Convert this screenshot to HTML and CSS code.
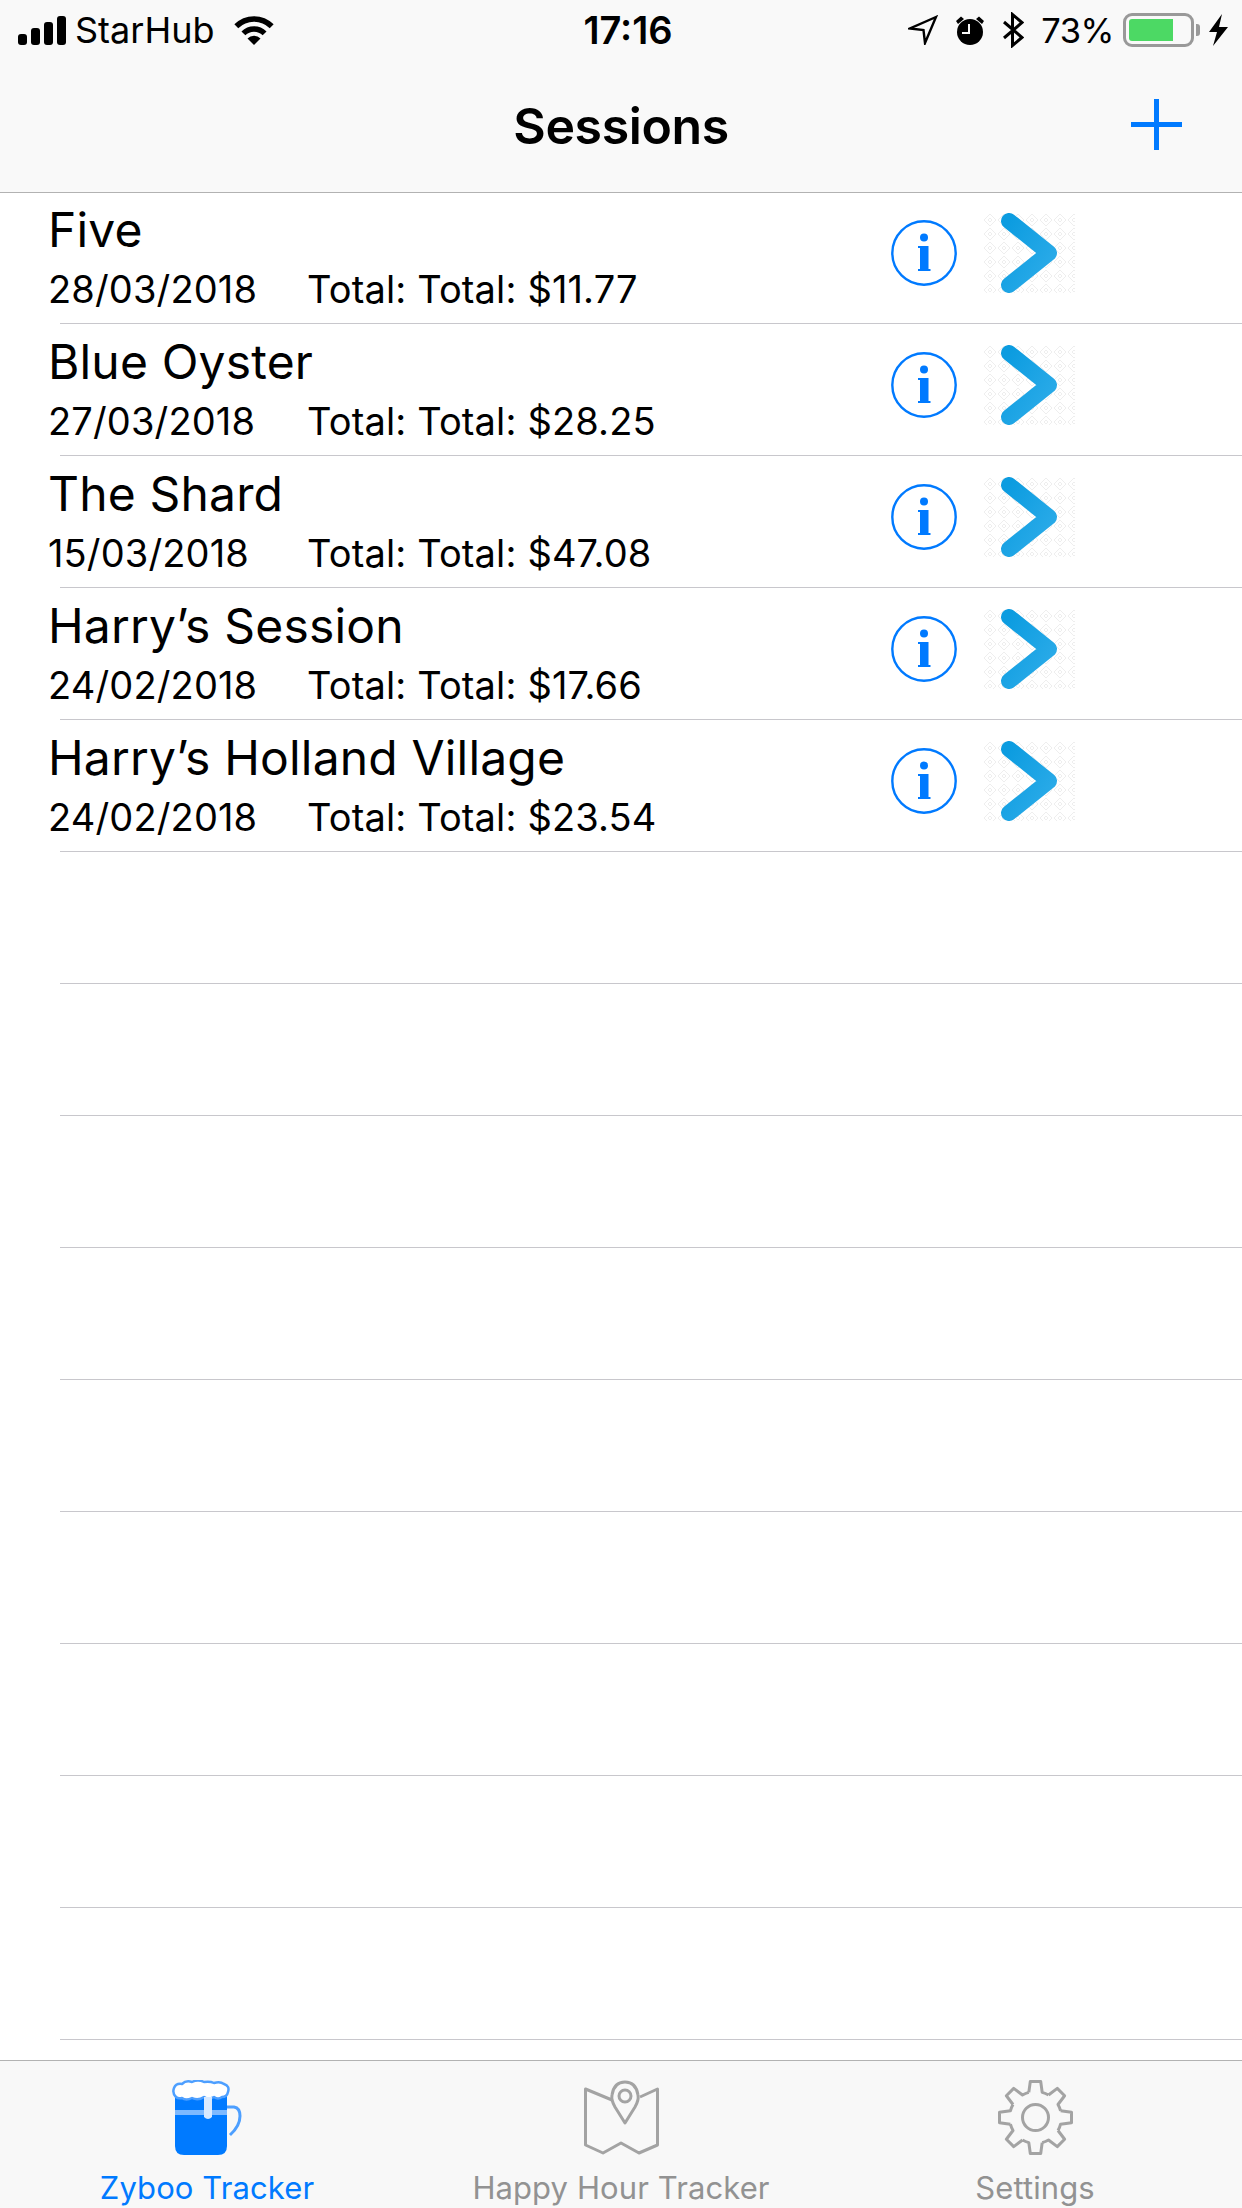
FILE: index.html
```html
<!DOCTYPE html>
<html lang="en">
<head>
  <meta charset="UTF-8" />
  <meta name="viewport" content="width=device-width, initial-scale=1" />
  <title>Sessions</title>
  <link rel="stylesheet" href="styles.css">
</head>
<body>
  <div class="page">
    <svg class="defs" width="0" height="0">
      <defs>
        <pattern id="tilePattern" width="14" height="14" patternUnits="userSpaceOnUse">
          <path d="M7 1 L13 7 L7 13 L1 7 Z M7 5 L9 7 L7 9 L5 7 Z" fill="none" stroke="#eeeeee" stroke-width="1" />
        </pattern>
        <linearGradient id="chevronFill" x1="0" y1="0" x2="1" y2="1">
          <stop offset="0" stop-color="#0c9ce0" />
          <stop offset="1" stop-color="#2dace9" />
        </linearGradient>
        <symbol id="infoIcon" viewBox="0 0 66 66">
          <circle cx="33" cy="33" r="31.700" fill="none" stroke="#007aff" stroke-width="2.400" />
          <circle cx="33" cy="17.500" r="4" fill="#007aff" />
          <path d="M27 26 H37.500 V49 H39.500 V51 H27 V49 H29 V28 H27 Z" fill="#007aff" />
        </symbol>
        <symbol id="nextIcon" viewBox="0 0 92 80">
          <rect width="92" height="80" fill="url(#tilePattern)" />
          <path d="M26 8 L66 40 L26 72" fill="none" stroke="url(#chevronFill)" stroke-width="16" stroke-linecap="round" stroke-linejoin="round" />
        </symbol>
      </defs>
    </svg>

    <header class="topbar">
      <div class="status">
        <div class="status-left">
          <div class="signal"><i></i><i></i><i></i><i></i></div>
          <span class="carrier">StarHub</span>
          <svg class="wifi" width="42" height="30" viewBox="0 0 42 30">
            <path d="M21 30 L14.500 23.500 A9 9 0 0 1 27.500 23.500 Z" fill="#000" />
            <path d="M10.400 18.400 A15 15 0 0 1 31.600 18.400" fill="none" stroke="#000" stroke-width="5.500" />
            <path d="M3.300 11.300 A25 25 0 0 1 38.700 11.300" fill="none" stroke="#000" stroke-width="5.500" />
          </svg>
        </div>
        <span class="clock">17:16</span>
        <div class="status-right">
          <svg width="30" height="30" viewBox="0 0 30 30">
            <path d="M28 2 L2 13.500 L15.500 15 L17 28 Z" fill="none" stroke="#000" stroke-width="2.400" />
          </svg>
          <svg class="alarm" width="30" height="30" viewBox="0 0 30 30">
            <circle cx="15" cy="17" r="13" fill="#000" />
            <path d="M1 6 L6 1.500 L9 4 L3 9 Z M29 6 L24 1.500 L21 4 L27 9 Z" fill="#000" />
            <path d="M14 9 V18 H7" fill="none" stroke="#f9f9f9" stroke-width="2" />
          </svg>
          <svg class="bluetooth" width="22" height="36" viewBox="0 0 22 36">
            <path d="M2 10 L20 25.500 L10.500 33.500 V2.500 L20 10.500 L2 26" fill="none" stroke="#000" stroke-width="3" />
          </svg>
          <span class="percent">73%</span>
          <div class="battery"><div class="battery-level"></div></div>
          <div class="battery-nub"></div>
          <svg class="bolt" width="19" height="32" viewBox="0 0 19 32">
            <path d="M13 0 L0 18 H8 L4 32 L19 13 H10 Z" fill="#000" />
          </svg>
        </div>
      </div>
      <div class="navbar">
        <h1>Sessions</h1>
        <svg class="add" width="51" height="51" viewBox="0 0 51 51">
          <path d="M25.500 0 V51 M0 25.500 H51" stroke="#007aff" stroke-width="5" />
        </svg>
      </div>
    </header>

    <main class="list">
      <div class="row">
        <div class="row-text">
          <div class="name">Five</div>
          <div class="meta"><span class="date">28/03/2018</span><span>Total: Total: $11.77</span></div>
        </div>
        <div class="actions">
          <svg class="info" width="66" height="66"><use href="#infoIcon" /></svg>
          <svg class="next" width="92" height="80"><use href="#nextIcon" /></svg>
        </div>
      </div>
      <div class="row">
        <div class="row-text">
          <div class="name">Blue Oyster</div>
          <div class="meta"><span class="date">27/03/2018</span><span>Total: Total: $28.25</span></div>
        </div>
        <div class="actions">
          <svg class="info" width="66" height="66"><use href="#infoIcon" /></svg>
          <svg class="next" width="92" height="80"><use href="#nextIcon" /></svg>
        </div>
      </div>
      <div class="row">
        <div class="row-text">
          <div class="name">The Shard</div>
          <div class="meta"><span class="date">15/03/2018</span><span>Total: Total: $47.08</span></div>
        </div>
        <div class="actions">
          <svg class="info" width="66" height="66"><use href="#infoIcon" /></svg>
          <svg class="next" width="92" height="80"><use href="#nextIcon" /></svg>
        </div>
      </div>
      <div class="row">
        <div class="row-text">
          <div class="name">Harry’s Session</div>
          <div class="meta"><span class="date">24/02/2018</span><span>Total: Total: $17.66</span></div>
        </div>
        <div class="actions">
          <svg class="info" width="66" height="66"><use href="#infoIcon" /></svg>
          <svg class="next" width="92" height="80"><use href="#nextIcon" /></svg>
        </div>
      </div>
      <div class="row">
        <div class="row-text">
          <div class="name">Harry’s Holland Village</div>
          <div class="meta"><span class="date">24/02/2018</span><span>Total: Total: $23.54</span></div>
        </div>
        <div class="actions">
          <svg class="info" width="66" height="66"><use href="#infoIcon" /></svg>
          <svg class="next" width="92" height="80"><use href="#nextIcon" /></svg>
        </div>
      </div>
      <!-- empty table cells -->
      <div class="row"></div>
      <div class="row"></div>
      <div class="row"></div>
      <div class="row"></div>
      <div class="row"></div>
      <div class="row"></div>
      <div class="row"></div>
      <div class="row"></div>
      <div class="row"></div>
    </main>

    <footer class="tabbar">
      <div class="tab active">
        <svg width="70" height="75" viewBox="0 0 70 75">
          <path d="M55 27 H62 Q68 28 68 36 Q68 46 58 55" fill="none" stroke="#4d9fff" stroke-width="3" />
          <path d="M3 16 H55 V66 Q55 75 46 75 H12 Q3 75 3 66 Z" fill="#007aff" />
          <rect x="3" y="30" width="52" height="5" fill="#7db9ff" />
          <path d="M4 17 Q0 13 2 8 Q4 3 10 4 Q14 0 20 2 Q26 -1 32 2 Q38 1 42 3 Q48 1 52 4 Q58 6 56 12 Q55 17 50 17 Q46 20 42 17 Q36 20 32 17 Q26 21 20 18 Q14 21 10 18 Q6 19 4 17 Z" fill="#fff" stroke="#4d9fff" stroke-width="2.500" stroke-linejoin="round" />
          <path d="M32 17 H40 V37 Q36 41 32 37 Z" fill="#d9eaff" />
        </svg>
        <span>Zyboo Tracker</span>
      </div>
      <div class="tab">
        <svg width="75" height="75" viewBox="0 0 75 75">
          <g fill="none" stroke="#a3a3a3" stroke-width="3" stroke-linejoin="round">
            <path d="M28 20 L1.500 9 V65 L19 73 L37 63 L55 73 L73.500 65 V9 L56 17" />
            <path d="M41 43 L31 27 Q27 20 28 15 Q30 2 41 2 Q52 2 54 15 Q55 20 51 27 Z" />
            <circle cx="41" cy="16" r="6" />
          </g>
        </svg>
        <span>Happy Hour Tracker</span>
      </div>
      <div class="tab">
        <svg width="75" height="75" viewBox="-37.500 -37.500 75 75">
          <g fill="none" stroke="#a3a3a3" stroke-width="3" stroke-linejoin="round">
            <path id="gearTooth" d="M-6.700 -25.100 L-5.200 -36 H5.200 L6.700 -25.100 A26 26 0 0 1 13 -22.500" />
            <use href="#gearTooth" transform="rotate(45)" />
            <use href="#gearTooth" transform="rotate(90)" />
            <use href="#gearTooth" transform="rotate(135)" />
            <use href="#gearTooth" transform="rotate(180)" />
            <use href="#gearTooth" transform="rotate(225)" />
            <use href="#gearTooth" transform="rotate(270)" />
            <use href="#gearTooth" transform="rotate(315)" />
            <circle r="13" />
          </g>
        </svg>
        <span>Settings</span>
      </div>
    </footer>
  </div>
</body>
</html>
```

FILE: styles.css
```css
* {
  box-sizing: border-box;
}
body {
  margin: 0;
  background: #fff;
  font-family: Inter, 'Liberation Sans', sans-serif;
  color: #000;
}
.page {
  width: 1242px;
  height: 2208px;
  display: flex;
  flex-direction: column;
  overflow: hidden;
}
.defs {
  position: absolute;
}
svg {
  display: block;
  flex: none;
}

/* top bars */
.topbar {
  height: 192px;
  flex: none;
  background: #f9f9f9;
  box-shadow: 0 1px 0 #b2b2b2;
  position: relative;
  z-index: 1;
}
.status {
  height: 60px;
  padding: 0 14px 0 18px;
  display: grid;
  grid-template-columns: 1fr auto 1fr;
  align-items: center;
}
.status-left {
  display: flex;
  align-items: center;
}
.signal {
  display: flex;
  align-items: flex-end;
  gap: 4px;
  height: 29px;
  margin-right: 9px;
}
.signal i {
  width: 9px;
  border-radius: 3px;
  background: #000;
}
.signal i:nth-child(1) { height: 11px; }
.signal i:nth-child(2) { height: 17px; }
.signal i:nth-child(3) { height: 23px; }
.signal i:nth-child(4) { height: 29px; }
.carrier {
  font-size: 36px;
  letter-spacing: 0;
  margin-right: 19px;
}
.clock {
  font-size: 38px;
  font-weight: 600;
  padding-left: 10px;
}
.status-right {
  display: flex;
  align-items: center;
  justify-content: flex-end;
}
.alarm {
  margin-left: 17px;
}
.bluetooth {
  margin-left: 17px;
}
.percent {
  font-size: 34.500px;
  letter-spacing: -0.5px;
  margin-left: 17px;
  margin-right: 9px;
}
.battery {
  width: 71px;
  height: 34px;
  border: 3px solid #999;
  border-radius: 9px;
  padding: 3px;
}
.battery-level {
  width: 44px;
  height: 100%;
  background: #4cd964;
  border-radius: 3px 0 0 3px;
}
.battery-nub {
  width: 4px;
  height: 12px;
  margin-left: 2px;
  background: #999;
  border-radius: 0 3px 3px 0;
}
.bolt {
  margin-left: 9px;
}
.navbar {
  height: 132px;
  position: relative;
  display: flex;
  align-items: center;
  justify-content: center;
}
.navbar h1 {
  margin: 0;
  font-size: 50px;
  font-weight: 600;
  letter-spacing: -0.4px;
}
.add {
  position: absolute;
  left: 1131px;
  top: 39px;
}

/* list */
.list {
  flex: 1;
  overflow: hidden;
}
.row {
  height: 132px;
  position: relative;
  display: flex;
  align-items: flex-start;
  justify-content: space-between;
  padding: 10px 167px 0 48px;
}
.row::after {
  content: "";
  position: absolute;
  left: 60px;
  right: 0;
  bottom: 0;
  height: 1px;
  background: #c8c7cc;
}
.name {
  font-size: 48px;
  line-height: 56px;
  letter-spacing: 0.17px;
}
.meta {
  font-size: 38px;
  line-height: 44px;
  margin-top: 9px;
  letter-spacing: 0.15px;
}
.date {
  display: inline-block;
  width: 259px;
}
.actions {
  display: flex;
  align-items: center;
  gap: 26px;
  padding-top: 11px;
}

/* tabs */
.tabbar {
  height: 148px;
  flex: none;
  background: #f8f8f8;
  border-top: 1px solid #b2b2b2;
  display: grid;
  grid-template-columns: repeat(3, 1fr);
}
.tab {
  display: flex;
  flex-direction: column;
  align-items: center;
  padding-top: 19px;
  color: #929292;
  font-size: 31px;
  letter-spacing: 0.1px;
}
.tab span {
  line-height: 36px;
  margin-top: 15px;
}
.tab.active {
  color: #007aff;
}
```
